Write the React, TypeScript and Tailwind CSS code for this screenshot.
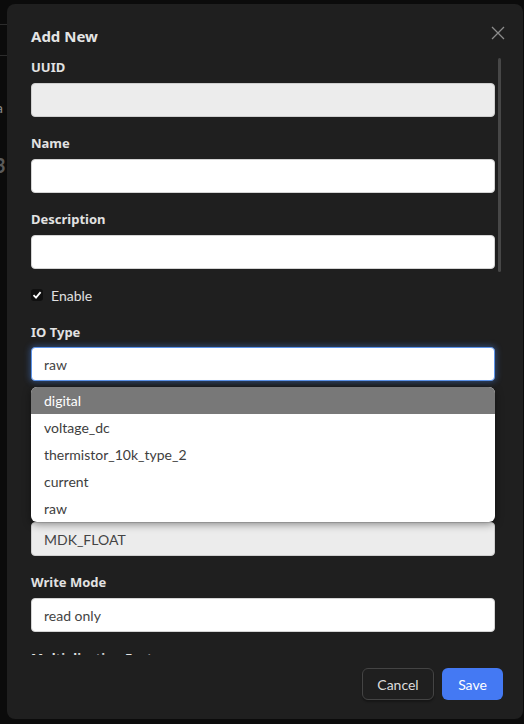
import React from "react";

const font = { fontFamily: '"Segoe UI", Lato, "Noto Sans", sans-serif' };
const boldFont = { fontFamily: '"Segoe UI", "Noto Sans", Lato, sans-serif' };

function Label({ children }: { children: React.ReactNode }) {
  return (
    <div className="h-5 mb-[6px] text-[13px] leading-5 font-bold text-[#e2e2e2]" style={boldFont}>
      {children}
    </div>
  );
}

function Input({ value, variant = "normal" }: { value?: string; variant?: "normal" | "disabled" | "focus" }) {
  const base = "h-[34px] w-full rounded-[4px] px-[12px] flex items-center text-[14px] text-[#444]";
  const cls =
    variant === "disabled"
      ? "bg-[#ececec] border border-[#cfcfcf]"
      : variant === "focus"
      ? "bg-white border border-[#5b93ea] shadow-[0_0_6px_1px_rgba(70,130,230,0.45)]"
      : "bg-white border border-[#d4d4d4]";
  return <div className={`${base} ${cls}`}>{value}</div>;
}

export default function App() {
  const options = ["digital", "voltage_dc", "thermistor_10k_type_2", "current", "raw"];
  return (
    <div className="relative w-[524px] h-[724px] bg-[#0b0b0b] overflow-hidden" style={font}>
      {/* background page bits */}
      <div className="absolute left-0 top-[24px] w-[10px] h-px bg-[#2c2c2c]" />
      <div className="absolute left-0 top-[55px] w-[10px] h-px bg-[#2c2c2c]" />
      <div className="absolute left-[-4px] top-[97px] text-[14px] text-[#8a8a8a]">a</div>
      <div className="absolute left-[-6px] top-[150px] text-[20px] font-bold text-[#5a5a5a]">3</div>

      {/* modal */}
      <div className="absolute left-[7px] top-[4px] w-[516px] h-[715px] bg-[#1f1f1f] rounded-[8px] flex flex-col">
        <div className="h-[48px] pl-[24px] pr-[18px] pt-[20px] flex items-start justify-between">
          <div className="text-[15px] font-bold leading-6 text-[#e4e4e4]" style={boldFont}>
            Add New
          </div>
          <svg width="14" height="14" viewBox="0 0 14 14" className="mt-[2px]">
            <path d="M1 1 L13 13 M13 1 L1 13" stroke="#8c8c8c" strokeWidth="1.3" />
          </svg>
        </div>

        <div className="relative h-[603px] overflow-hidden">
          <div className="absolute right-[22px] top-[6px] w-[3px] h-[214px] rounded-full bg-[#474747]" />
          <div className="pl-[24px] pr-[28px] pt-[5px]">
            <div className="mb-[16px]">
              <Label>UUID</Label>
              <Input variant="disabled" />
            </div>
            <div className="mb-[16px]">
              <Label>Name</Label>
              <Input />
            </div>
            <div className="mb-[16px]">
              <Label>Description</Label>
              <Input />
            </div>
            <div className="mb-[16px] h-5 flex items-center gap-[8px]">
              <div className="w-[12px] h-[12px] rounded-[3px] bg-[#101010] flex items-center justify-center">
                <svg width="10" height="10" viewBox="0 0 10 10">
                  <path d="M1.5 5.2 L4 7.6 L8.6 2.2" stroke="#ffffff" strokeWidth="1.8" fill="none" />
                </svg>
              </div>
              <span className="text-[14px] text-[#e0e0e0]">Enable</span>
            </div>
            <div className="relative mb-[39px]">
              <div className="pt-[1px]">
                <Label>IO Type</Label>
              </div>
              <div className="-mt-[1px]">
                <Input value="raw" variant="focus" />
              </div>
              <div className="absolute left-0 right-0 top-[66px] z-10 bg-white rounded-[6px] overflow-hidden shadow-[0_2px_8px_rgba(0,0,0,0.45)]">
                {options.map((o, i) => (
                  <div
                    key={o}
                    className={`h-[27px] pl-[13px] flex items-center text-[14px] ${
                      i === 0 ? "bg-[#787878] text-white" : "text-[#3e3e3e]"
                    }`}
                  >
                    {o}
                  </div>
                ))}
              </div>
            </div>
            <div className="mb-[16px]">
              <Label>IO Number</Label>
              <Input />
            </div>
            <div className="mb-[16px]">
              <Label>Data Type</Label>
              <Input value="MDK_FLOAT" variant="disabled" />
            </div>
            <div className="mb-[16px]">
              <Label>Write Mode</Label>
              <Input value="read only" />
            </div>
            <div className="mb-[16px]">
              <Label>Multiplication Factor</Label>
              <Input />
            </div>
          </div>
        </div>

        <div className="flex-1 flex justify-end items-start gap-[8px] pr-[20px] pt-[13px]">
          <div className="h-[32px] w-[72px] rounded-[6px] border border-[#444] bg-[#1f1f1f] text-[#dcdcdc] text-[14px] flex items-center justify-center shadow-[0_2px_2px_rgba(0,0,0,0.3)]">
            Cancel
          </div>
          <div className="h-[32px] w-[61px] rounded-[6px] bg-[#4479f3] text-white text-[14px] flex items-center justify-center">
            Save
          </div>
        </div>
      </div>
    </div>
  );
}
